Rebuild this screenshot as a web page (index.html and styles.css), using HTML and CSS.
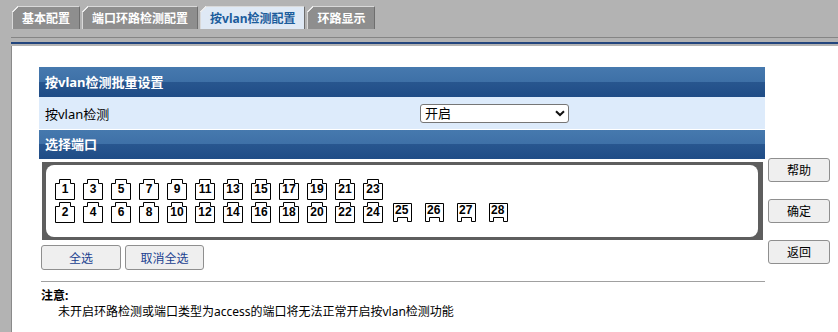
FILE: index.html
```html
<!DOCTYPE html>
<html lang="zh">
<head>
<meta charset="utf-8">
<title>按vlan检测配置</title>
<link rel="stylesheet" href="styles.css">
</head>
<body>
<div class="tabs">
  <div class="tab">基本配置</div>
  <div class="tab">端口环路检测配置</div>
  <div class="tab active">按vlan检测配置</div>
  <div class="tab">环路显示</div>
</div>
<div class="frame">
  <div class="navy"></div>
  <div class="panel">
    <div class="left">
      <div class="hdr">按vlan检测批量设置</div>
      <div class="row">
        <span class="lbl">按vlan检测</span>
        <span class="selwrap">
          <select class="sel"><option>开启</option><option>关闭</option></select>
          <svg class="chev" width="10" height="7" viewBox="0 0 10 7"><polyline points="1,1.2 5,5 9,1.2" fill="none" stroke="#111" stroke-width="2"/></svg>
        </span>
      </div>
      <div class="hdr hdr2">选择端口</div>
      <div class="box">
        <div class="inner">
          <div class="prow">
            <div class="port"><svg viewBox="0 0 20 21"><path d="M0.5 4.5H4.5V0.5H15.5V4.5H19.5V20.5H0.5Z"/></svg><span>1</span></div>
            <div class="port"><svg viewBox="0 0 20 21"><path d="M0.5 4.5H4.5V0.5H15.5V4.5H19.5V20.5H0.5Z"/></svg><span>3</span></div>
            <div class="port"><svg viewBox="0 0 20 21"><path d="M0.5 4.5H4.5V0.5H15.5V4.5H19.5V20.5H0.5Z"/></svg><span>5</span></div>
            <div class="port"><svg viewBox="0 0 20 21"><path d="M0.5 4.5H4.5V0.5H15.5V4.5H19.5V20.5H0.5Z"/></svg><span>7</span></div>
            <div class="port"><svg viewBox="0 0 20 21"><path d="M0.5 4.5H4.5V0.5H15.5V4.5H19.5V20.5H0.5Z"/></svg><span>9</span></div>
            <div class="port"><svg viewBox="0 0 20 21"><path d="M0.5 4.5H4.5V0.5H15.5V4.5H19.5V20.5H0.5Z"/></svg><span>11</span></div>
            <div class="port"><svg viewBox="0 0 20 21"><path d="M0.5 4.5H4.5V0.5H15.5V4.5H19.5V20.5H0.5Z"/></svg><span>13</span></div>
            <div class="port"><svg viewBox="0 0 20 21"><path d="M0.5 4.5H4.5V0.5H15.5V4.5H19.5V20.5H0.5Z"/></svg><span>15</span></div>
            <div class="port"><svg viewBox="0 0 20 21"><path d="M0.5 4.5H4.5V0.5H15.5V4.5H19.5V20.5H0.5Z"/></svg><span>17</span></div>
            <div class="port"><svg viewBox="0 0 20 21"><path d="M0.5 4.5H4.5V0.5H15.5V4.5H19.5V20.5H0.5Z"/></svg><span>19</span></div>
            <div class="port"><svg viewBox="0 0 20 21"><path d="M0.5 4.5H4.5V0.5H15.5V4.5H19.5V20.5H0.5Z"/></svg><span>21</span></div>
            <div class="port"><svg viewBox="0 0 20 21"><path d="M0.5 4.5H4.5V0.5H15.5V4.5H19.5V20.5H0.5Z"/></svg><span>23</span></div>
          </div>
          <div class="prow">
            <div class="port"><svg viewBox="0 0 20 21"><path d="M0.5 4.5H4.5V0.5H15.5V4.5H19.5V20.5H0.5Z"/></svg><span>2</span></div>
            <div class="port"><svg viewBox="0 0 20 21"><path d="M0.5 4.5H4.5V0.5H15.5V4.5H19.5V20.5H0.5Z"/></svg><span>4</span></div>
            <div class="port"><svg viewBox="0 0 20 21"><path d="M0.5 4.5H4.5V0.5H15.5V4.5H19.5V20.5H0.5Z"/></svg><span>6</span></div>
            <div class="port"><svg viewBox="0 0 20 21"><path d="M0.5 4.5H4.5V0.5H15.5V4.5H19.5V20.5H0.5Z"/></svg><span>8</span></div>
            <div class="port"><svg viewBox="0 0 20 21"><path d="M0.5 4.5H4.5V0.5H15.5V4.5H19.5V20.5H0.5Z"/></svg><span>10</span></div>
            <div class="port"><svg viewBox="0 0 20 21"><path d="M0.5 4.5H4.5V0.5H15.5V4.5H19.5V20.5H0.5Z"/></svg><span>12</span></div>
            <div class="port"><svg viewBox="0 0 20 21"><path d="M0.5 4.5H4.5V0.5H15.5V4.5H19.5V20.5H0.5Z"/></svg><span>14</span></div>
            <div class="port"><svg viewBox="0 0 20 21"><path d="M0.5 4.5H4.5V0.5H15.5V4.5H19.5V20.5H0.5Z"/></svg><span>16</span></div>
            <div class="port"><svg viewBox="0 0 20 21"><path d="M0.5 4.5H4.5V0.5H15.5V4.5H19.5V20.5H0.5Z"/></svg><span>18</span></div>
            <div class="port"><svg viewBox="0 0 20 21"><path d="M0.5 4.5H4.5V0.5H15.5V4.5H19.5V20.5H0.5Z"/></svg><span>20</span></div>
            <div class="port"><svg viewBox="0 0 20 21"><path d="M0.5 4.5H4.5V0.5H15.5V4.5H19.5V20.5H0.5Z"/></svg><span>22</span></div>
            <div class="port"><svg viewBox="0 0 20 21"><path d="M0.5 4.5H4.5V0.5H15.5V4.5H19.5V20.5H0.5Z"/></svg><span>24</span></div>
            <div class="sfps">
              <div class="sfp"><svg viewBox="0 0 19 19"><path d="M0.5 0.5H18.5V18.5H14.5V14.5H4.5V18.5H0.5Z"/></svg><span>25</span></div>
              <div class="sfp"><svg viewBox="0 0 19 19"><path d="M0.5 0.5H18.5V18.5H14.5V14.5H4.5V18.5H0.5Z"/></svg><span>26</span></div>
              <div class="sfp"><svg viewBox="0 0 19 19"><path d="M0.5 0.5H18.5V18.5H14.5V14.5H4.5V18.5H0.5Z"/></svg><span>27</span></div>
              <div class="sfp"><svg viewBox="0 0 19 19"><path d="M0.5 0.5H18.5V18.5H14.5V14.5H4.5V18.5H0.5Z"/></svg><span>28</span></div>
            </div>
          </div>
        </div>
      </div>
      <div class="btns">
        <button class="bb w80">全选</button>
        <button class="bb w79">取消全选</button>
      </div>
      <div class="hr"></div>
      <div class="note-t">注意:</div>
      <div class="note">未开启环路检测或端口类型为access的端口将无法正常开启按vlan检测功能</div>
    </div>
    <div class="right">
      <button class="rb">帮助</button>
      <button class="rb">确定</button>
      <button class="rb">返回</button>
    </div>
  </div>
</div>
</body>
</html>
```

FILE: styles.css
```css
body {
  margin: 0;
  background: #b3b3b3;
  font-family: "Noto Sans", "Noto Sans CJK SC", sans-serif;
  font-size: 12px;
  color: #000;
  overflow: hidden;
}

.tabs {
  display: flex;
  gap: 2px;
  padding: 6px 0 0 12px;
  height: 23px;
}

.tab {
  position: relative;
  height: 23px;
  box-sizing: border-box;
  padding: 1px 9px 0 9px;
  border-top: 1px solid #d9d9d9;
  border-left: 1px solid #d9d9d9;
  border-right: 1px solid #6e6e6e;
  background: #8e8e8e;
  color: #fff;
  font-weight: bold;
  line-height: 21px;
  white-space: nowrap;
}

.tab::before {
  content: "";
  position: absolute;
  left: -1px;
  top: -1px;
  width: 6px;
  height: 6px;
  background: linear-gradient(135deg, #b3b3b3 0 42%, #ececec 42% 62%, transparent 62%);
}

.tab.active {
  background: #dfe9f5;
  color: #1b5c9c;
}

.frame {
  margin: 8px 0 0 11px;
  border-top: 1px solid #858585;
  padding-top: 4px;
}

.navy {
  height: 2px;
  background: #23467e;
  margin-bottom: 2px;
}

.panel {
  display: flex;
  align-items: flex-start;
  background: #fff;
  border-left: 1px solid #8a8a8a;
  padding: 21px 0 0 27px;
  height: 286px;
  box-sizing: border-box;
}

.left {
  width: 726px;
}

.hdr {
  height: 30px;
  line-height: 30px;
  padding-left: 6px;
  color: #fff;
  font-weight: bold;
  font-size: 13px;
  background: linear-gradient(#4679ae, #3e70a7 50%, #28568f 50%, #1f4c86);
}

.hdr2 {
  height: 29px;
  line-height: 29px;
}

.row {
  height: 32px;
  background: #ddebfb;
  display: flex;
  align-items: center;
  padding-left: 6px;
  border-bottom: 1px solid #fff;
  font-size: 13px;
}

.lbl {
  width: 375px;
}

.selwrap {
  position: relative;
  display: block;
  width: 149px;
  height: 19px;
}

.sel {
  appearance: none;
  -webkit-appearance: none;
  display: block;
  width: 149px;
  height: 19px;
  box-sizing: border-box;
  border: 1px solid #767676;
  border-radius: 3px;
  background: #fff;
  padding: 0 0 0 4px;
  margin: 0;
  font-family: "Noto Sans", "Noto Sans CJK SC", sans-serif;
  font-size: 13px;
  line-height: 17px;
  color: #000;
}

.chev {
  position: absolute;
  right: 4px;
  top: 6px;
  pointer-events: none;
}

.box {
  margin: 3px 2px 0 3px;
  background: #5e5e5e;
  padding: 3px 5px 3px 4px;
}

.inner {
  background: #fff;
  border-radius: 8px;
  height: 72px;
  box-sizing: border-box;
  padding: 14px 0 0 9px;
  display: flex;
  flex-direction: column;
  gap: 2px;
}

.prow {
  display: flex;
  align-items: flex-start;
  gap: 8px;
  height: 21px;
}

.port {
  position: relative;
  width: 20px;
  height: 21px;
}

.port svg,
.sfp svg {
  position: absolute;
  left: 0;
  top: 0;
  width: 100%;
  height: 100%;
}

.port path,
.sfp path {
  fill: #fff;
  stroke: #000;
  stroke-width: 1;
}

.port span {
  position: relative;
  display: block;
  text-align: center;
  padding-top: 3px;
  font: bold 12px/14px "Liberation Sans", Arial, sans-serif;
}

.sfps {
  display: flex;
  gap: 13px;
  margin-left: 2px;
}

.sfp {
  position: relative;
  width: 19px;
  height: 19px;
  margin-top: 1px;
}

.sfp span {
  position: relative;
  display: block;
  padding: 1px 0 0 2px;
  font: bold 12px/13px "Liberation Sans", Arial, sans-serif;
}

button {
  font-family: "Noto Sans", "Noto Sans CJK SC", sans-serif;
  font-size: 12px;
  background: #efefef;
  border: 1px solid #8f8f8f;
  border-radius: 3px;
  padding: 0;
  margin: 0;
  color: #000;
}

.btns {
  display: flex;
  gap: 4px;
  margin: 5px 0 0 2px;
}

.bb {
  height: 25px;
  color: #213f8f;
}

.w80 { width: 80px; }
.w79 { width: 79px; }

.hr {
  margin: 11px 0 0 2px;
  height: 1px;
  background: #a0a0a0;
}

.note-t {
  font-weight: bold;
  margin: 6px 0 0 2px;
  line-height: 16px;
}

.note {
  padding-left: 19px;
  line-height: 16px;
}

.right {
  display: flex;
  flex-direction: column;
  gap: 17px;
  padding-top: 91px;
  margin-left: 3px;
}

.rb {
  width: 62px;
  height: 24px;
}
```
